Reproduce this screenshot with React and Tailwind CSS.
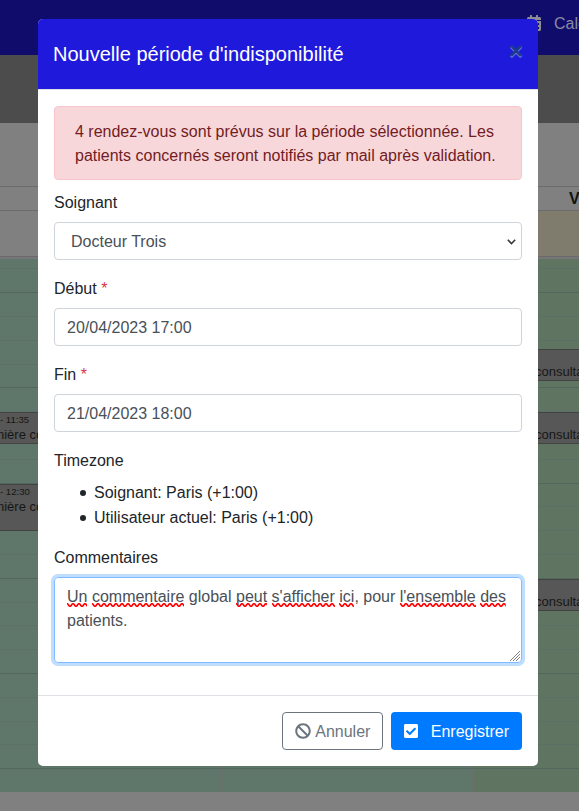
import { FaBan, FaCheckSquare, FaCalendarAlt } from "react-icons/fa";

const slots = Array.from({ length: 22 }, (_, k) => ({ y: 9.9 + 23.8 * k, solid: k % 4 === 1 }));

function Slots() {
  return (
    <svg className="absolute inset-0 w-full h-full">
      {slots.map(({ y, solid }) => (
        <line
          key={y}
          x1="0"
          x2="579"
          y1={Math.floor(y) + 0.5}
          y2={Math.floor(y) + 0.5}
          stroke={solid ? "#53675e" : "#586c63"}
          strokeDasharray={solid ? undefined : "1 1"}
        />
      ))}
    </svg>
  );
}

function Appointment({ className, time, children }) {
  return (
    <div className={"absolute overflow-hidden whitespace-nowrap border-y border-[#434343] bg-[#575757] text-[#161616] " + className}>
      <div className="h-[14px] text-[9.6px] leading-[14px]">{time}</div>
      <div className="text-[13px] leading-[15px]">{children}</div>
    </div>
  );
}

function Calendar() {
  return (
    <div className="flex h-[811px] flex-col overflow-hidden bg-[#808080]">
      <div className="flex h-[55px] shrink-0 items-start bg-[#0f0c6c] pl-[527px] pt-[12px] text-[#8a8aa0]">
        <FaCalendarAlt className="mt-[3px] h-4 w-3.5 shrink-0 text-[#8c8c93]" />
        <span className="ml-[13px] whitespace-nowrap text-base leading-6">Calendrier</span>
      </div>
      <div className="h-[68px] shrink-0 bg-[#4c4c4c]" />
      <div className="h-[63px] shrink-0" />
      <div className="flex h-[25px] shrink-0 items-center border-y border-[#6c6c6e] pl-[569px] text-base font-bold text-[#101214]">Ven</div>
      <div className="flex h-[45px] shrink-0">
        <div className="w-[472px]" />
        <div className="flex-1 bg-[#7f7c6d]" />
      </div>
      <div className="h-[3px] shrink-0 border-t border-[#6a6a6c] bg-[#777577]" />
      <div className="relative flex h-[533px] shrink-0">
        <div className="w-[221px] border-r border-[#6c6f6c] bg-[#5f766b]" />
        <div className="w-[252px] border-r border-[#6c6f6c] bg-[#5f766b]" />
        <div className="flex-1 bg-[#5f7562]" />
        <Slots />
        <Appointment className="left-0 top-[153px] h-[32px] w-[60px]" time="- 11:35"><span className="-ml-[3px]">nière consultation</span></Appointment>
        <Appointment className="left-0 top-[225px] h-[47px] w-[60px]" time="- 12:30"><span className="-ml-[3px]">nière consultation</span></Appointment>
        <Appointment className="left-[500px] top-[90px] h-[32px] w-[79px] pl-[35px]">consultation</Appointment>
        <Appointment className="left-[500px] top-[153px] h-[32px] w-[79px] pl-[35px]">consultation</Appointment>
        <Appointment className="left-[500px] top-[320px] h-[32px] w-[79px] pl-[35px]">consultation</Appointment>
      </div>
    </div>
  );
}

function Misspelt({ id, children }) {
  return (
    <span className="relative inline-block">
      {children}
      <svg className="absolute left-0 top-[18px] h-[4px] w-full">
        <pattern id={id} width="6" height="4" patternUnits="userSpaceOnUse">
          <path d="M-1.5 2 Q0 -0.6 1.5 2 T4.5 2 T7.5 2" fill="none" stroke="#f00" strokeWidth="1.6" />
        </pattern>
        <rect width="100%" height="4" fill={`url(#${id})`} />
      </svg>
    </span>
  );
}

function Label({ children }) {
  return <div className="mb-[7px] pt-px">{children}</div>;
}

function Field({ label, value }) {
  return (
    <div className="mb-4">
      <Label>{label} <span className="text-[#dc3545]">*</span></Label>
      <div className="h-[38px] rounded border border-[#ced4da] px-3 pt-[7px] text-[#495057]">{value}</div>
    </div>
  );
}

function Bullet({ children }) {
  return (
    <li className="flex items-center">
      <span className="mr-[8px] h-1.5 w-1.5 rounded-full bg-[#212529]" />
      {children}
    </li>
  );
}

function Dialog() {
  return (
    <div className="absolute left-[38px] top-[19px] flex h-[747px] w-[500px] flex-col overflow-hidden rounded-[5px] bg-white">
      <div className="flex h-[71px] shrink-0 items-start justify-between border-b border-[#dee2e6] bg-[#1f1adb] pl-[15px] pr-[15px] pt-5">
        <h5 className="text-xl leading-[30px] text-white">Nouvelle période d'indisponibilité</h5>
        <span className="text-2xl font-bold leading-6 text-[#1d3c8d] [text-shadow:0_1px_0_#7f8fe6]">×</span>
      </div>
      <div className="h-[605px] shrink-0 p-4">
        <div className="mb-[10px] rounded border border-[#f5c6cb] bg-[#f8d7da] px-5 pb-[11px] pt-[13px] text-[#721c24]">
          4 rendez-vous sont prévus sur la période sélectionnée. Les patients concernés seront notifiés par mail après validation.
        </div>
        <div className="mb-4">
          <Label>Soignant</Label>
          <div className="flex h-[38px] items-center justify-between rounded border border-[#ced4da] pl-4 pr-[5px] pt-[2px] text-[#495057]">
            Docteur Trois
            <svg className="h-[6px] w-[9px]" viewBox="0 0 9 6" fill="none" stroke="#343a40" strokeWidth="1.6"><path d="M.8 .8 4.5 4.5 8.2 .8" /></svg>
          </div>
        </div>
        <Field label="Début" value="20/04/2023 17:00" />
        <Field label="Fin" value="21/04/2023 18:00" />
        <Label>Timezone</Label>
        <ul className="mb-[15px] pl-[26px] leading-[25px]">
          <Bullet>Soignant: Paris (+1:00)</Bullet>
          <Bullet>Utilisateur actuel: Paris (+1:00)</Bullet>
        </ul>
        <Label>Commentaires</Label>
        <div className="relative h-[86px] rounded border border-[#80bdff] px-3 pt-[7px] text-[#495057] shadow-[0_0_0_3px_#bfdeff]">
          <Misspelt id="w1">Un</Misspelt> <Misspelt id="w2">commentaire</Misspelt> global <Misspelt id="w3">peut</Misspelt> <Misspelt id="w4">s'afficher</Misspelt> <Misspelt id="w5">ici</Misspelt>, pour <Misspelt id="w6">l'ensemble</Misspelt> <Misspelt id="w7">des</Misspelt> patients.
          <svg className="absolute bottom-[1px] right-[1px] h-[10px] w-[10px]" viewBox="0 0 10 10" stroke="#808080" strokeWidth="1"><path d="M0 10 10 0M3 10 10 3M6 10 10 6" /></svg>
        </div>
      </div>
      <div className="flex flex-1 justify-end gap-2 border-t border-[#dee2e6] p-4">
        <div className="flex h-[38px] w-[101px] items-center whitespace-nowrap rounded border border-[#6c757d] pl-3 text-[#6c757d]">
          <FaBan className="mr-[4.5px] h-4 w-4 shrink-0" />
          <span className="pt-[2px]">Annuler</span>
        </div>
        <div className="flex h-[38px] items-center rounded bg-[#007bff] px-[13px] text-white">
          <FaCheckSquare className="mr-[13px] h-4 w-3.5" />
          <span className="pt-[2px]">Enregistrer</span>
        </div>
      </div>
    </div>
  );
}

export default function App() {
  return (
    <div className="relative h-[811px] w-[579px] overflow-hidden font-['Liberation_Sans',Arial,sans-serif] text-base leading-6 text-[#212529]">
      <Calendar />
      <Dialog />
    </div>
  );
}
